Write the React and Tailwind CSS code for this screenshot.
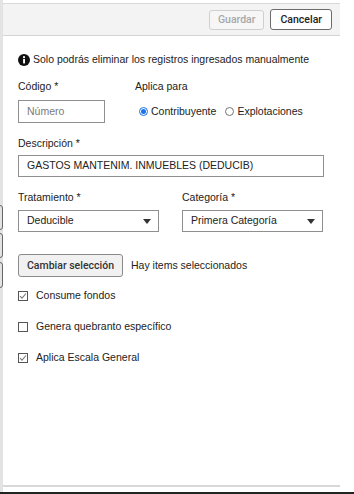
import React from 'react';

const Radio = ({ checked, label }) => (
    <label className="flex items-center gap-[3px]">
        {checked ? (
            <span className="w-[9px] h-[9px] rounded-full border border-[#1a73e8] flex items-center justify-center">
                <span className="w-[5px] h-[5px] rounded-full bg-[#1a73e8]" />
            </span>
        ) : (
            <span className="w-[9px] h-[9px] rounded-full border border-[#767676]" />
        )}
        <span>{label}</span>
    </label>
);

const Check = ({ checked, label }) => (
    <div className="flex items-center h-[16px] gap-[8px]">
        <span className="w-[10px] h-[10px] border border-[#555] flex items-center justify-center bg-white">
            {checked && (
                <svg width="8" height="8" viewBox="0 0 8 8">
                    <path d="M1 4.2 L3 6.2 L7 1.5" fill="none" stroke="#7a7a7a" strokeWidth="1.1" />
                </svg>
            )}
        </span>
        <span>{label}</span>
    </div>
);

const Select = ({ value }) => (
    <div className="w-[141px] h-[22px] border border-[#8f8f8f] flex items-center justify-between pl-[8px] pr-[7px]">
        <span>{value}</span>
        <svg width="8" height="5" viewBox="0 0 8 5">
            <path d="M0 0 L8 0 L4 5 Z" fill="#333" />
        </svg>
    </div>
);

export default function App() {
    return (
        <div className="w-[354px] h-[494px] bg-white flex flex-col overflow-hidden text-[#222] text-[10.5px] font-['Liberation_Sans',Arial,sans-serif]">
            <div className="flex flex-1 relative">
                <div className="w-[3px] bg-[#e3e3e3]" />
                {/* clipped items from the page behind */}
                <div className="absolute left-[-20px] top-[205px] w-[23px] h-[25px] border border-[#666] rounded-[3px]" />
                <div className="absolute left-[-20px] top-[233px] w-[23px] h-[25px] border border-[#666] rounded-[3px]" />
                <div className="absolute left-[-20px] top-[262px] w-[23px] h-[26px] border border-[#666] rounded-[3px]" />
                <div className="w-[337px] mt-[3px] mb-[5px] flex flex-col border-t border-b-2 border-[#d8d8d8]">
                    <div className="h-[32px] bg-[#f3f3f4] border-b border-[#d4d4d4] flex items-center justify-end gap-[6px] pr-[8px] font-['Roboto',sans-serif] font-medium text-[10.5px]">
                        <button className="h-[20px] px-[8px] border border-[#cfcfcf] rounded-[3px] text-[#a8a8a8] bg-[#f6f6f6]">Guardar</button>
                        <button className="h-[21px] px-[9px] border border-[#6b6b6b] rounded-[3px] text-[#222] bg-white">Cancelar</button>
                    </div>
                    <div className="pl-[15px] pr-[16px] flex flex-col">
                        <div className="mt-[16px] h-[16px] flex items-center gap-[3px]">
                            <svg width="12" height="12" viewBox="0 0 12 12">
                                <circle cx="6" cy="6" r="6" fill="#111" />
                                <rect x="5.1" y="5" width="1.9" height="4.4" fill="#fff" />
                                <circle cx="6" cy="3.2" r="1.1" fill="#fff" />
                            </svg>
                            <span>Solo podrás eliminar los registros ingresados manualmente</span>
                        </div>
                        <div className="mt-[10px] flex">
                            <div className="w-[117px] flex flex-col">
                                <span className="h-[16px] leading-[16px]">Código *</span>
                                <div className="mt-[6px] w-[87px] h-[23px] border border-[#8f8f8f] flex items-center pl-[8px] text-[#7a7a7a]">Número</div>
                            </div>
                            <div className="flex flex-col">
                                <span className="h-[16px] leading-[16px]">Aplica para</span>
                                <div className="mt-[6px] h-[23px] flex items-center gap-[9px] pl-[4px]">
                                    <Radio checked label="Contribuyente" />
                                    <Radio label="Explotaciones" />
                                </div>
                            </div>
                        </div>
                        <span className="mt-[12px] h-[16px] leading-[16px]">Descripción *</span>
                        <div className="mt-[4px] w-[306px] h-[22px] border border-[#8f8f8f] flex items-center pl-[8px]">GASTOS MANTENIM. INMUEBLES (DEDUCIB)</div>
                        <div className="mt-[12px] flex">
                            <div className="w-[164px] flex flex-col">
                                <span className="h-[16px] leading-[16px]">Tratamiento *</span>
                                <div className="mt-[5px]"><Select value="Deducible" /></div>
                            </div>
                            <div className="flex flex-col">
                                <span className="h-[16px] leading-[16px]">Categoría *</span>
                                <div className="mt-[5px]"><Select value="Primera Categoría" /></div>
                            </div>
                        </div>
                        <div className="mt-[22px] flex items-center gap-[8px]">
                            <button className="h-[23px] w-[105px] border border-[#8a8a8a] rounded-[3px] bg-[#f1f1f1] font-['Roboto',sans-serif] font-medium text-[10.5px] text-[#333]">Cambiar selección</button>
                            <span>Hay items seleccionados</span>
                        </div>
                        <div className="mt-[11px] flex flex-col gap-[15px]">
                            <Check checked label="Consume fondos" />
                            <Check label="Genera quebranto específico" />
                            <Check checked label="Aplica Escala General" />
                        </div>
                    </div>
                </div>
            </div>
            <div className="h-[2px] bg-[#222]" />
        </div>
    );
}
